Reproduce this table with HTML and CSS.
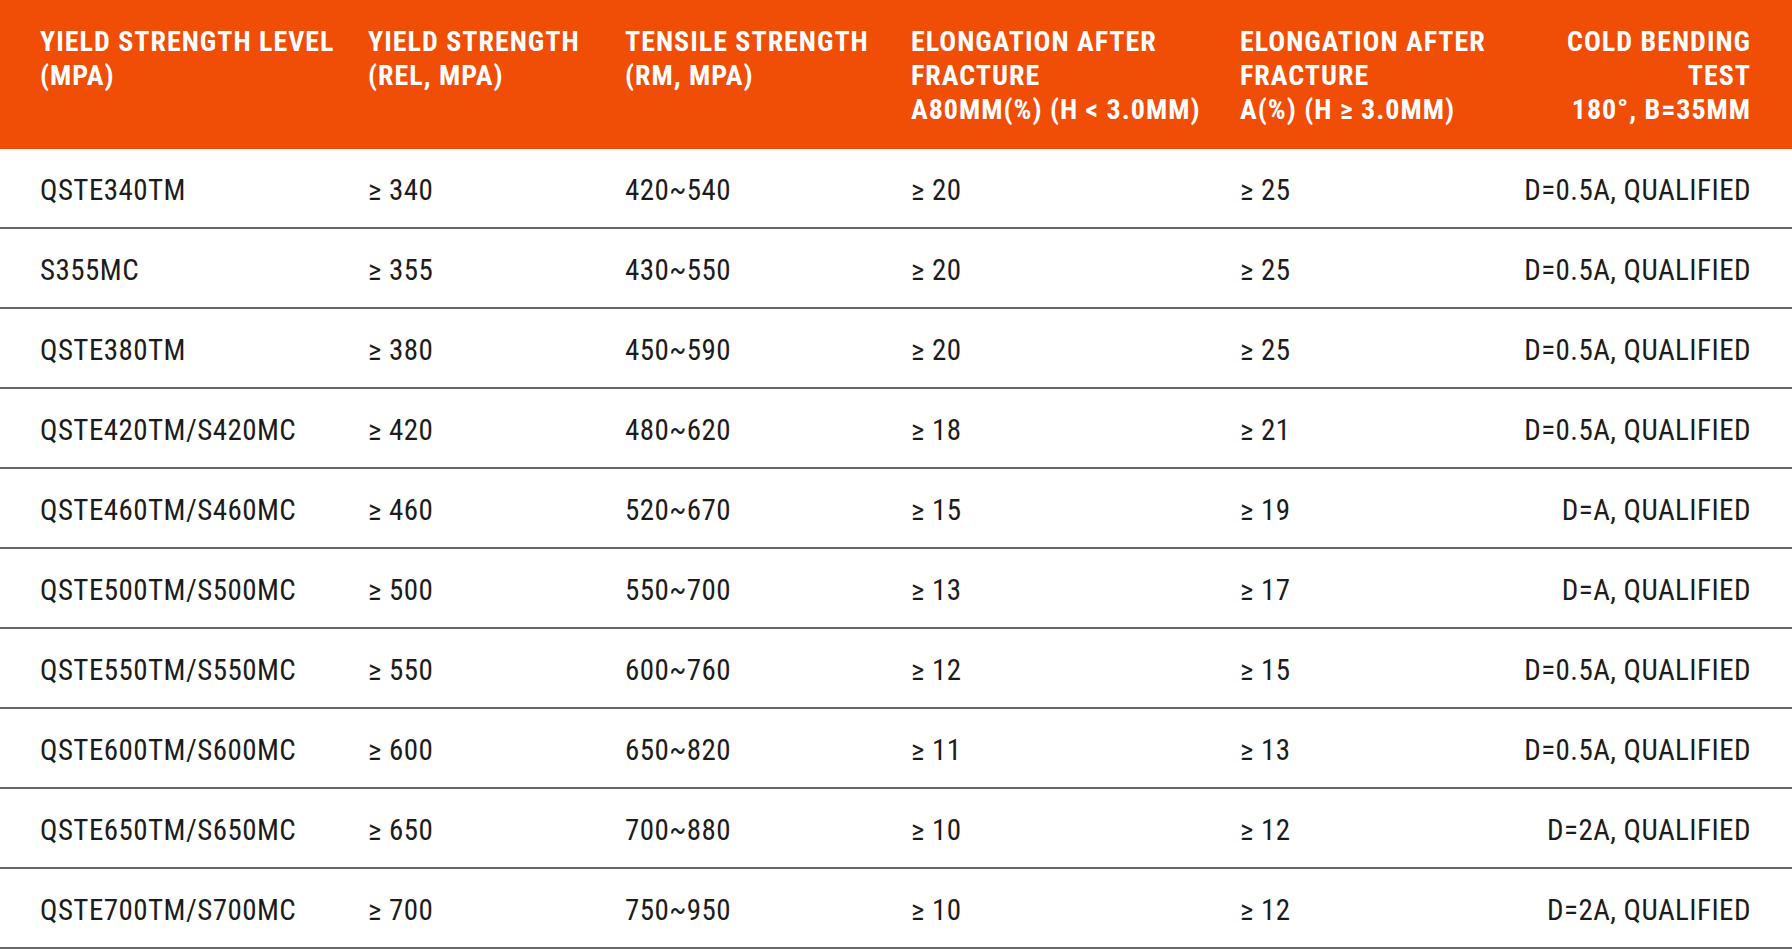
FILE: index.html
```html
<!DOCTYPE html>
<html lang="en">
<head>
<meta charset="utf-8">
<title>Mechanical properties</title>
<link rel="stylesheet" href="styles.css">
</head>
<body>
<div class="spec-table">
  <div class="row head">
    <div class="cell">YIELD STRENGTH LEVEL<br>(MPA)</div>
    <div class="cell">YIELD STRENGTH<br>(REL, MPA)</div>
    <div class="cell">TENSILE STRENGTH<br>(RM, MPA)</div>
    <div class="cell">ELONGATION AFTER<br>FRACTURE<br>A80MM(%) (H &lt; 3.0MM)</div>
    <div class="cell">ELONGATION AFTER<br>FRACTURE<br>A(%) (H ≥ 3.0MM)</div>
    <div class="cell end">COLD BENDING<br>TEST<br>180°, B=35MM</div>
  </div>
  <div class="row"><div class="cell">QSTE340TM</div><div class="cell">≥ 340</div><div class="cell">420~540</div><div class="cell">≥ 20</div><div class="cell">≥ 25</div><div class="cell end">D=0.5A, QUALIFIED</div></div>
  <div class="row"><div class="cell">S355MC</div><div class="cell">≥ 355</div><div class="cell">430~550</div><div class="cell">≥ 20</div><div class="cell">≥ 25</div><div class="cell end">D=0.5A, QUALIFIED</div></div>
  <div class="row"><div class="cell">QSTE380TM</div><div class="cell">≥ 380</div><div class="cell">450~590</div><div class="cell">≥ 20</div><div class="cell">≥ 25</div><div class="cell end">D=0.5A, QUALIFIED</div></div>
  <div class="row"><div class="cell">QSTE420TM/S420MC</div><div class="cell">≥ 420</div><div class="cell">480~620</div><div class="cell">≥ 18</div><div class="cell">≥ 21</div><div class="cell end">D=0.5A, QUALIFIED</div></div>
  <div class="row"><div class="cell">QSTE460TM/S460MC</div><div class="cell">≥ 460</div><div class="cell">520~670</div><div class="cell">≥ 15</div><div class="cell">≥ 19</div><div class="cell end">D=A, QUALIFIED</div></div>
  <div class="row"><div class="cell">QSTE500TM/S500MC</div><div class="cell">≥ 500</div><div class="cell">550~700</div><div class="cell">≥ 13</div><div class="cell">≥ 17</div><div class="cell end">D=A, QUALIFIED</div></div>
  <div class="row"><div class="cell">QSTE550TM/S550MC</div><div class="cell">≥ 550</div><div class="cell">600~760</div><div class="cell">≥ 12</div><div class="cell">≥ 15</div><div class="cell end">D=0.5A, QUALIFIED</div></div>
  <div class="row"><div class="cell">QSTE600TM/S600MC</div><div class="cell">≥ 600</div><div class="cell">650~820</div><div class="cell">≥ 11</div><div class="cell">≥ 13</div><div class="cell end">D=0.5A, QUALIFIED</div></div>
  <div class="row"><div class="cell">QSTE650TM/S650MC</div><div class="cell">≥ 650</div><div class="cell">700~880</div><div class="cell">≥ 10</div><div class="cell">≥ 12</div><div class="cell end">D=2A, QUALIFIED</div></div>
  <div class="row"><div class="cell">QSTE700TM/S700MC</div><div class="cell">≥ 700</div><div class="cell">750~950</div><div class="cell">≥ 10</div><div class="cell">≥ 12</div><div class="cell end">D=2A, QUALIFIED</div></div>
</div>
</body>
</html>
```

FILE: styles.css
```css
html, body {
  margin: 0;
  padding: 0;
  background: #ffffff;
}

body {
  font-family: "Roboto Condensed", "Roboto", "Liberation Sans Narrow", sans-serif;
  font-stretch: condensed;
  color: #1c1c1c;
}

.spec-table {
  width: 1792px;
}

.row {
  display: grid;
  grid-template-columns: 328px 257px 286px 329px 270px 1fr;
  padding: 3px 41px 0 40px;
  height: 80px;
  box-sizing: border-box;
  align-items: center;
  border-bottom: 2px solid #686868;
  font-size: 29px;
  line-height: 34px;
  letter-spacing: 0.45px;
}

.row.head {
  height: 149px;
  padding-top: 25px;
  background: #f04d07;
  color: #ffffff;
  font-size: 28px;
  font-weight: 700;
  letter-spacing: 1px;
  border-bottom: none;
  align-items: start;
}

.cell {
  white-space: nowrap;
}

.cell.end {
  text-align: right;
}
```
